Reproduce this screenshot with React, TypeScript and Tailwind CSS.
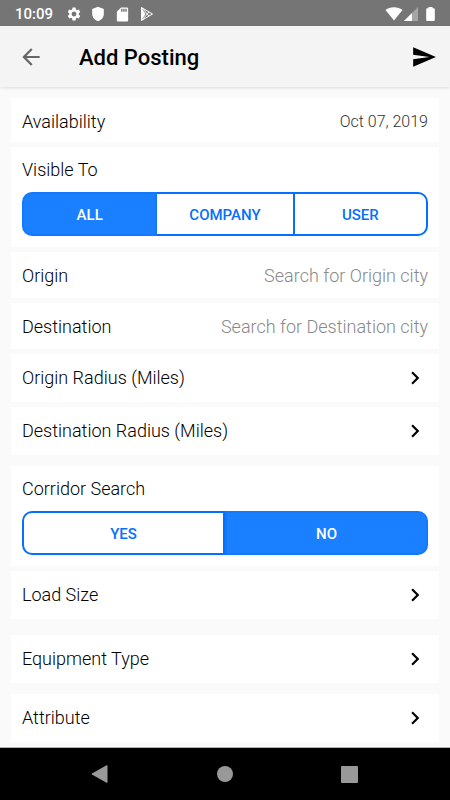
import { useState } from "react";
import { MdArrowBack, MdChevronRight, MdSdCard, MdSend, MdSettings } from "react-icons/md";

function StatusBar() {
    return (
        <div className="flex h-[26px] items-center justify-between bg-[#757575] pt-0.5 pl-[15px] pr-[15px] text-white">
            <div className="flex items-center">
                <span className="w-[51px] text-[15px] leading-5 font-medium">10:09</span>
                <MdSettings size={16} />
                <svg className="ml-[9px]" width="14" height="16" viewBox="0 0 14 16" fill="currentColor">
                    <path d="M7 .8 12.800 3V8c0 3.300-2.400 6-5.800 7.200C3.600 14 1.200 11.300 1.200 8V3z" />
                </svg>
                <MdSdCard className="ml-[9px]" size={17} />
                <svg className="ml-[9px]" width="14" height="16" viewBox="0 0 14 16" fill="none" stroke="currentColor" strokeLinejoin="round">
                    <path d="M1.500 1.500 12.500 8 1.500 14.500z" />
                    <path d="M1.500 1.500 9 10M1.500 14.500 9 6" />
                    <path d="M1.200 1.500 5.500 8 1.200 14.500z" fill="currentColor" stroke="none" />
                </svg>
            </div>
            <div className="flex items-center">
                <svg width="18" height="14" viewBox="0 0 18 14" fill="currentColor">
                    <path d="M9 13.500 .5 3C2.800 1.200 5.800.2 9 .2s6.200 1 8.500 2.800z" />
                </svg>
                <svg className="ml-px" width="14" height="14" viewBox="0 0 14 14" fill="currentColor">
                    <path d="M14 0v14H0z" opacity=".35" />
                    <path d="M8 6v8H0z" />
                </svg>
                <svg className="ml-2" width="9" height="14" viewBox="0 0 9 14" fill="currentColor">
                    <path d="M2.500 0h4v1.200h1.300q1 0 1 1V13q0 1-1 1H1.200q-1 0-1-1V2.200q0-1 1-1h1.300z" />
                </svg>
            </div>
        </div>
    );
}

function Segmented({ label, options, initial }: { label: string; options: string[]; initial: string }) {
    const [selected, setSelected] = useState(initial);

    return (
        <section className="bg-white px-[11px] pt-[11px] pb-[11px]">
            <h2 className="text-lg leading-6 font-light">{label}</h2>
            <div role="group" aria-label={label} className="mt-[10px] grid h-11 auto-cols-fr grid-flow-col">
                {options.map((option) => (
                    <button
                        key={option}
                        type="button"
                        aria-pressed={selected === option}
                        onClick={() => setSelected(option)}
                        className={`border-y-2 pt-0.5 text-[15px] font-medium first:rounded-l-[10px] first:border-x-2 last:rounded-r-[10px] last:border-x-2 ${selected === option ? "border-[#1278ff] bg-[#1a80ff] text-white" : "border-[#056fff] bg-white text-[#056fff]"}`}
                    >
                        {option}
                    </button>
                ))}
            </div>
        </section>
    );
}

function CityField({ id, label, placeholder }: { id: string; label: string; placeholder: string }) {
    return (
        <div className="flex h-[46px] items-center bg-white px-[11px] pt-0.5">
            <label htmlFor={id} className="text-lg leading-6 font-light">{label}</label>
            <input
                id={id}
                type="text"
                placeholder={placeholder}
                className="min-w-0 flex-1 text-right text-lg leading-6 font-light placeholder:text-[#888] focus:outline-none"
            />
        </div>
    );
}

function LinkRow({ label }: { label: string }) {
    return (
        <button type="button" className="flex h-12 w-full items-center justify-between bg-white px-[11px] text-left">
            <span className="text-lg leading-6 font-light">{label}</span>
            <MdChevronRight size={26} />
        </button>
    );
}

export default function App() {
    return (
        <div className="flex min-h-screen flex-col bg-[#fafafa] font-[Roboto,sans-serif] text-black">
            <StatusBar />
            <header className="flex h-[61px] items-center bg-[#f4f4f4] pl-[18px] pr-[13px] shadow-[0_1px_3px_rgba(0,0,0,0.12)]">
                <button type="button" aria-label="Back" className="text-[#666]">
                    <MdArrowBack size={26} />
                </button>
                <h1 className="ml-[35px] flex-1 pt-0.5 text-[22px] leading-7 font-medium">Add Posting</h1>
                <button type="button" aria-label="Send">
                    <MdSend size={26} />
                </button>
            </header>

            <main className="flex flex-1 flex-col gap-[5px] px-[11px] pt-[11px] pb-[5px]">
                <button type="button" className="flex h-11 w-full items-center justify-between bg-white px-[11px] pt-1">
                    <span className="text-lg leading-6 font-light">Availability</span>
                    <span className="text-base leading-6 font-light text-[#333]">Oct 07, 2019</span>
                </button>
                <Segmented label="Visible To" options={["ALL", "COMPANY", "USER"]} initial="ALL" />
                <CityField id="origin" label="Origin" placeholder="Search for Origin city" />
                <CityField id="destination" label="Destination" placeholder="Search for Destination city" />
                <LinkRow label="Origin Radius (Miles)" />
                <LinkRow label="Destination Radius (Miles)" />
                <div className="flex flex-col gap-[5px] pt-[6px]">
                    <Segmented label="Corridor Search" options={["YES", "NO"]} initial="NO" />
                    <LinkRow label="Load Size" />
                </div>
                <div className="flex flex-col gap-[11px] pt-[11px]">
                    <LinkRow label="Equipment Type" />
                    <LinkRow label="Attribute" />
                </div>
            </main>

            <nav className="grid h-[53px] grid-cols-3 border-t border-[#b0b0b0] bg-black px-[38px] text-[#999]">
                <button type="button" aria-label="Back" className="flex items-center justify-center">
                    <svg width="18" height="18" viewBox="0 0 18 18" fill="currentColor">
                        <path d="M15.500 .3q1-.5 1 .5v16.400q0 1-1 .5L1 9.500q-.7-.5 0-1z" />
                    </svg>
                </button>
                <button type="button" aria-label="Home" className="flex items-center justify-center">
                    <span className="size-4 rounded-full bg-[#999]" />
                </button>
                <button type="button" aria-label="Recents" className="flex items-center justify-center">
                    <span className="size-[17px] rounded-[1px] bg-[#999]" />
                </button>
            </nav>
        </div>
    );
}
